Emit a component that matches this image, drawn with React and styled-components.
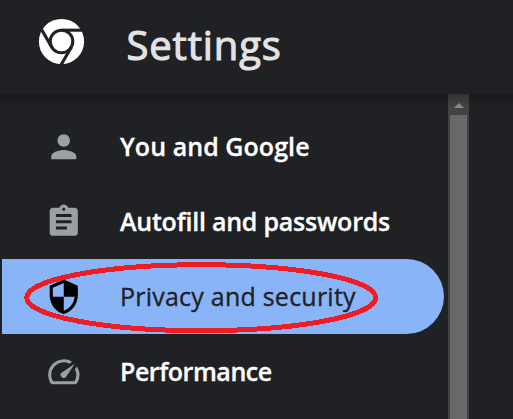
import React from "react";
import styled, { createGlobalStyle } from "styled-components";

const GlobalStyle = createGlobalStyle`
  * { box-sizing: border-box; }
  body { margin: 0; background: #202124; overflow: hidden; }
`;

const Page = styled.div`
  width: 513px;
  height: 419px;
  display: flex;
  flex-direction: column;
  overflow: hidden;
  background: #202124;
  font-family: "Open Sans", "Noto Sans", sans-serif;
`;

const Header = styled.header`
  flex: 0 0 94px;
  display: flex;
  align-items: flex-start;
  padding: 18px 0 0 38px;
  gap: 41.5px;
`;

const Title = styled.h1`
  margin: 0;
  padding-top: 1px;
  font-size: 40px;
  line-height: 52px;
  font-weight: 400;
  letter-spacing: 0.85px;
  -webkit-text-stroke: 1.1px #e3e3e3;
  color: #e3e3e3;
  white-space: nowrap;
`;

const Body = styled.div`
  flex: 1;
  min-height: 0;
  display: flex;
  position: relative;
  &::before {
    content: "";
    position: absolute;
    inset: 0 0 auto 0;
    height: 13px;
    background: linear-gradient(rgba(0, 0, 0, 0.25), rgba(0, 0, 0, 0.1) 50%, transparent);
  }
`;

const Menu = styled.nav`
  width: 448px;
  padding: 15px 4px 0 2px;
`;

const Item = styled.a`
  position: relative;
  display: flex;
  align-items: center;
  height: 75px;
  padding-left: 43px;
  gap: 37.5px;
  border-radius: 0 37.5px 37.5px 0;
  background: ${(p) => (p.$selected ? "#8ab4f8" : "transparent")};
  color: ${(p) => (p.$selected ? "#202124" : "#fff")};
  font-weight: ${(p) => (p.$selected ? 400 : 600)};
  -webkit-text-stroke: ${(p) => (p.$selected ? "0.35px #202124" : "0.3px #fff")};
`;

const Label = styled.span`
  padding-bottom: 2px;
  font-size: 25px;
  line-height: 34px;
  letter-spacing: ${(p) => p.$spacing}px;
  white-space: nowrap;
`;

const Icon = styled.svg`
  flex: none;
  width: 37.5px;
  height: 37.5px;
  fill: ${(p) => (p.$selected ? "#000" : "#9aa0a6")};
  stroke: none;
`;

const Logo = styled.svg`
  flex: none;
  width: 47px;
  height: 47px;
`;

const Highlight = styled.svg`
  position: absolute;
  left: 21px;
  top: 2px;
  width: 358px;
  height: 73px;
  fill: none;
  stroke: #ee1c24;
  stroke-width: 5;
  shape-rendering: crispEdges;
`;

const Scrollbar = styled.div`
  width: 21px;
  display: flex;
  flex-direction: column;
  background: #424242;
`;

const ArrowButton = styled.div`
  height: 21px;
  display: flex;
  justify-content: center;
  padding-top: 9px;
`;

const Arrow = styled.svg`
  width: 10px;
  height: 5px;
  fill: #8b8b8b;
`;

const Thumb = styled.div`
  flex: 1;
  margin: 0 2px;
  background: #686868;
`;

const items = [
  {
    label: "You and Google",
    spacing: 0.06,
    path: "M12 12c2.21 0 4-1.79 4-4s-1.79-4-4-4-4 1.79-4 4 1.79 4 4 4zm0 2c-2.67 0-8 1.34-8 4v2h16v-2c0-2.66-5.33-4-8-4z",
  },
  {
    label: "Autofill and passwords",
    spacing: -0.23,
    path: "M19 3h-4.18C14.4 1.84 13.3 1 12 1c-1.3 0-2.4.84-2.82 2H5c-1.1 0-2 .9-2 2v14c0 1.1.9 2 2 2h14c1.1 0 2-.9 2-2V5c0-1.1-.9-2-2-2zm-7 0c.55 0 1 .45 1 1s-.45 1-1 1-1-.45-1-1 .45-1 1-1zm2 14H7v-2h7v2zm3-4H7v-2h10v2zm0-4H7V7h10v2z",
  },
  {
    label: "Privacy and security",
    spacing: 0.23,
    selected: true,
    path: "M12 1L3 5v6c0 5.55 3.84 10.74 9 12 5.16-1.26 9-6.45 9-12V5l-9-4zm0 10.99h7c-.53 4.12-3.28 7.79-7 8.94V12H5V6.3l7-3.11v8.8z",
  },
  {
    label: "Performance",
    spacing: -0.45,
    path: "M20.38 8.57l-1.23 1.85a8 8 0 0 1-.22 7.58H5.07A8 8 0 0 1 15.58 6.85l1.85-1.23A10 10 0 0 0 3.35 19a2 2 0 0 0 1.72 1h13.85a2 2 0 0 0 1.74-1 10 10 0 0 0-.27-10.44zm-9.79 6.84a2 2 0 0 0 2.83 0l5.66-8.49-8.49 5.66a2 2 0 0 0 0 2.83z",
  },
];

function ChromeLogo() {
  return (
    <Logo viewBox="0 0 47 47">
      <circle cx="23.5" cy="23.5" r="22.6" fill="#fff" />
      <g fill="none" stroke="#202124" strokeWidth="3.1">
        <circle cx="23.5" cy="23.5" r="11.3" />
        <path d="M23.5 12.2H47" />
        <path d="M23.5 12.2H47" transform="rotate(120 23.5 23.5)" />
        <path d="M23.5 12.2H47" transform="rotate(240 23.5 23.5)" />
      </g>
    </Logo>
  );
}

export default function App() {
  return (
    <Page>
      <GlobalStyle />
      <Header>
        <ChromeLogo />
        <Title>Settings</Title>
      </Header>
      <Body>
        <Menu>
          {items.map((item) => (
            <Item key={item.label} $selected={item.selected}>
              <Icon viewBox="0 0 24 24" $selected={item.selected}>
                <path d={item.path} />
              </Icon>
              <Label $spacing={item.spacing}>{item.label}</Label>
              {item.selected && (
                <Highlight viewBox="0 0 358 73">
                  <ellipse cx="178.2" cy="36.7" rx="174.5" ry="33" />
                </Highlight>
              )}
            </Item>
          ))}
        </Menu>
        <Scrollbar>
          <ArrowButton>
            <Arrow viewBox="0 0 10 5">
              <path d="M0 5L5 0l5 5z" />
            </Arrow>
          </ArrowButton>
          <Thumb />
        </Scrollbar>
      </Body>
    </Page>
  );
}
